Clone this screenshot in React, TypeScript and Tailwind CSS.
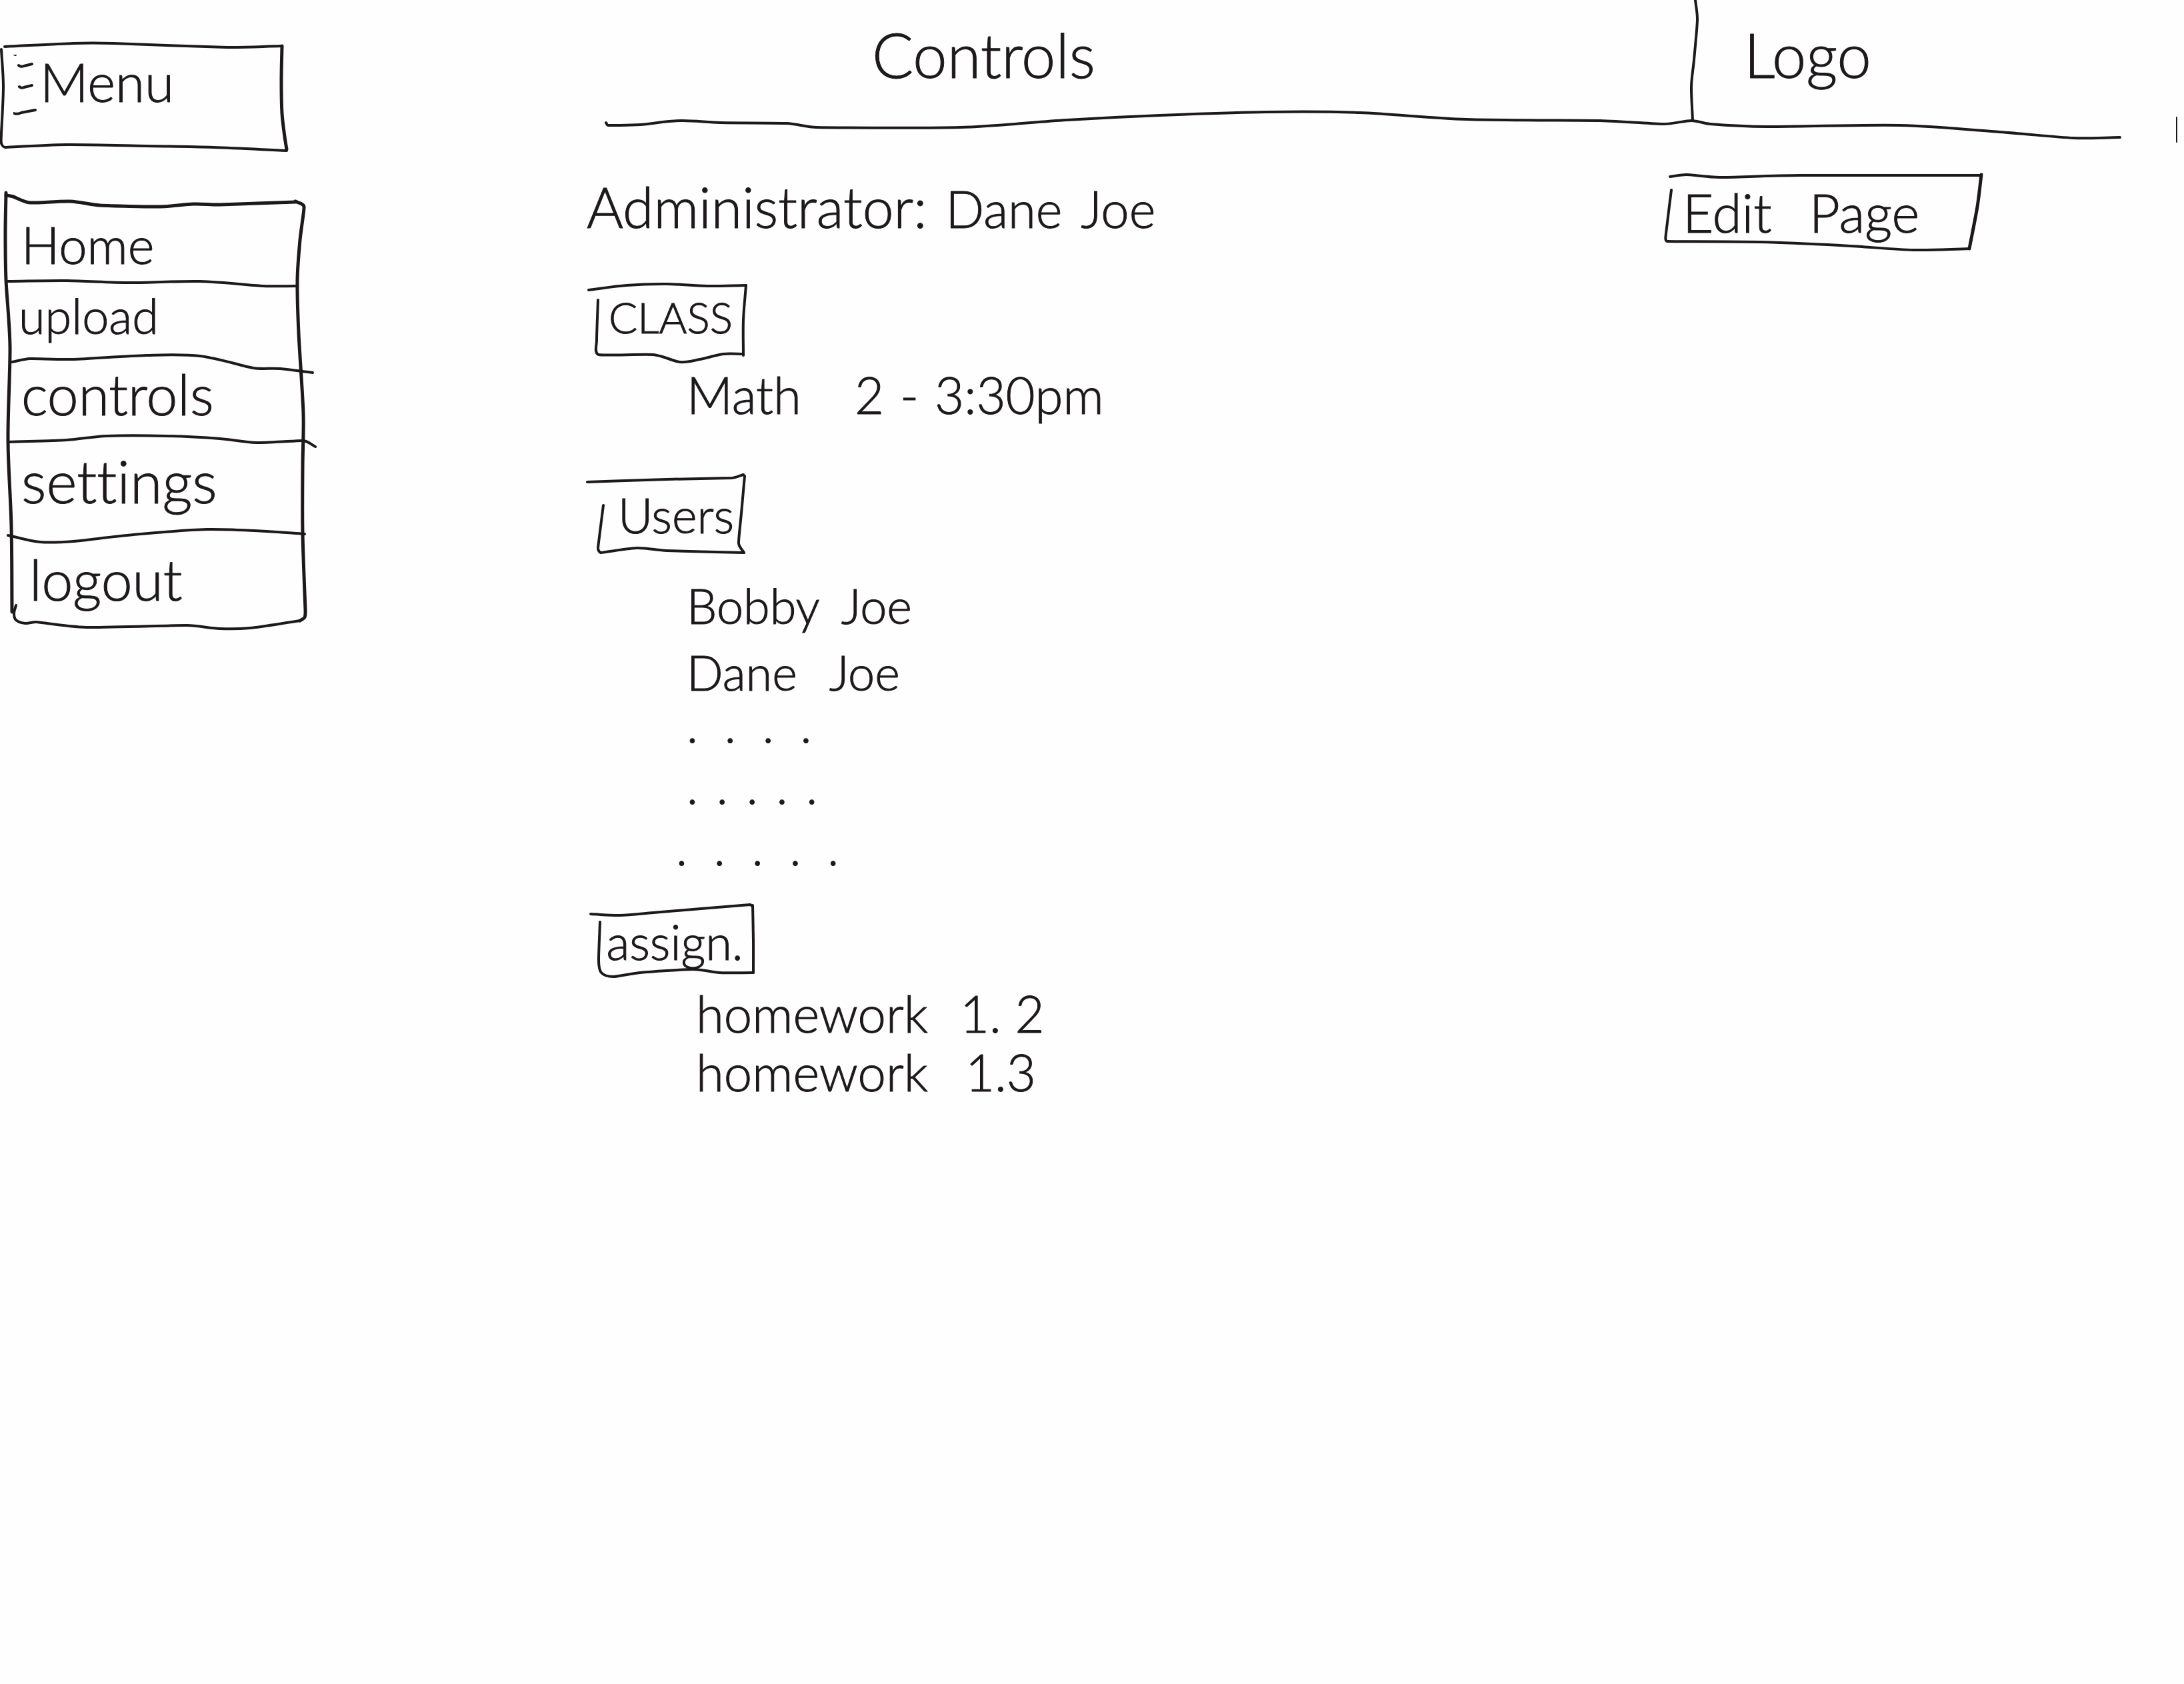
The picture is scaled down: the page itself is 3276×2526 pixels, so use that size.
import type { ReactNode } from "react";

type Stroke = { points: number[]; width?: number };

/** Turns a flat x,y list into a smooth pen stroke. */
function penPath(points: number[]): string {
  const p: [number, number][] = [];
  for (let i = 0; i < points.length; i += 2) p.push([points[i], points[i + 1]]);
  const unit = (i: number): [number, number] => {
    const a = p[Math.max(i - 1, 0)];
    const b = p[Math.min(i + 1, p.length - 1)];
    const len = Math.hypot(b[0] - a[0], b[1] - a[1]) || 1;
    return [(b[0] - a[0]) / len, (b[1] - a[1]) / len];
  };
  let d = `M${p[0][0]} ${p[0][1]}`;
  for (let i = 0; i < p.length - 1; i++) {
    const b = p[i];
    const c = p[i + 1];
    const reach = Math.hypot(c[0] - b[0], c[1] - b[1]);
    const prev = i > 0 ? Math.hypot(b[0] - p[i - 1][0], b[1] - p[i - 1][1]) : reach;
    const next = i + 2 < p.length ? Math.hypot(p[i + 2][0] - c[0], p[i + 2][1] - c[1]) : reach;
    const r1 = Math.min(reach, prev) / 3;
    const r2 = Math.min(reach, next) / 3;
    const u = unit(i);
    const v = unit(i + 1);
    d += `C${b[0] + u[0] * r1} ${b[1] + u[1] * r1} ${c[0] - v[0] * r2} ${c[1] - v[1] * r2} ${c[0]} ${c[1]}`;
  }
  return d;
}

/** Pen-drawn outline that stretches with the box it decorates. */
function Pen({ box, strokes }: { box: string; strokes: Stroke[] }) {
  return (
    <svg
      aria-hidden="true"
      viewBox={box}
      preserveAspectRatio="none"
      className="pointer-events-none absolute inset-0 size-full overflow-visible"
      fill="none"
      stroke="#1d181c"
      strokeLinecap="round"
      strokeLinejoin="round"
    >
      {strokes.map((s, i) => (
        <path key={i} d={penPath(s.points)} strokeWidth={s.width ?? 4} vectorEffect="non-scaling-stroke" />
      ))}
    </svg>
  );
}

const menuStrokes: Stroke[] = [
  { points: [7, 70, 110, 65, 170, 65, 340, 71, 422, 69] },
  { points: [423, 69, 422, 120, 423, 170, 427, 205, 430, 224], width: 5 },
  { points: [430, 226, 320, 221, 220, 219, 100, 217, 8, 221, 2, 215, 2, 200, 5, 130, 2, 74] },
];

const navStrokes: Stroke[] = [
  { points: [9, 293, 20, 295, 45, 304, 105, 302, 150, 308, 240, 310, 290, 306, 330, 307, 443, 303], width: 5 },
  { points: [443, 302, 456, 310, 450, 360, 446, 420, 448, 500, 455, 620, 454, 700, 454, 800, 458, 915, 457, 926, 450, 931], width: 5 },
  { points: [450, 931, 375, 942, 330, 943, 280, 938, 130, 941, 55, 933, 38, 935, 24, 930, 21, 920, 24, 908] },
  { points: [9, 289, 8, 350, 9, 420, 15, 520, 12, 660, 17, 790, 18, 918], width: 5 },
  { points: [12, 422, 100, 421, 195, 424, 300, 422, 395, 429, 446, 429] },
  { points: [18, 543, 45, 538, 110, 539, 220, 533, 300, 534, 380, 552, 420, 553, 469, 559] },
  { points: [12, 663, 100, 660, 160, 654, 250, 654, 330, 658, 385, 664, 455, 661, 473, 670] },
  { points: [12, 803, 60, 813, 110, 812, 200, 802, 310, 794, 400, 797, 457, 801] },
];

const headerStrokes: Stroke[] = [
  {
    points: [
      909, 184, 912, 188, 960, 187, 1020, 181, 1080, 184, 1180, 185, 1225, 191, 1440, 191, 1600, 180, 1740, 173,
      1900, 168, 2040, 169, 2200, 179, 2400, 181, 2495, 186, 2537, 181, 2565, 186, 2650, 190, 2850, 188, 3000, 198,
      3110, 207, 3180, 206,
    ],
  },
  { points: [2543, 0, 2546, 30, 2541, 90, 2537, 130, 2539, 181] },
  { points: [3265, 176, 3265, 213], width: 2 },
];

const editStrokes: Stroke[] = [
  { points: [2505, 265, 2530, 262, 2580, 266, 2700, 263, 2971, 263] },
  { points: [2972, 262, 2966, 310, 2954, 373], width: 5 },
  { points: [2954, 373, 2870, 375, 2760, 368, 2640, 363, 2501, 362, 2499, 350, 2507, 285] },
];

const classStrokes: Stroke[] = [
  { points: [883, 435, 940, 428, 1000, 426, 1060, 429, 1119, 428] },
  { points: [1119, 428, 1115, 480, 1115, 533] },
  { points: [1115, 531, 1085, 531, 1050, 539, 1020, 543, 980, 532, 898, 532, 895, 510, 897, 450] },
];

const usersStrokes: Stroke[] = [
  { points: [881, 723, 1000, 719, 1098, 717, 1115, 712] },
  { points: [1117, 714, 1112, 770, 1108, 815, 1116, 829] },
  { points: [1116, 829, 1000, 826, 955, 822, 902, 829, 897, 822, 905, 758] },
];

const assignStrokes: Stroke[] = [
  { points: [886, 1371, 930, 1373, 980, 1369, 1125, 1357, 1129, 1360] },
  { points: [1129, 1358, 1130, 1410, 1130, 1459] },
  { points: [1130, 1459, 1080, 1459, 1040, 1454, 960, 1459, 920, 1465, 902, 1459, 898, 1440, 900, 1383] },
];

const navItems = [
  { label: "Home", style: "h-32 pl-6 text-[76px]" },
  { label: "upload", style: "h-24 pb-3 pl-5 text-[72px]" },
  { label: "controls", style: "h-32 pl-6 text-[84px]" },
  { label: "settings", style: "h-36 pb-3 pl-6 text-[88px]" },
  { label: "logout", style: "h-[139px] pl-9 text-[84px]" },
];

function SectionTag({ style, box, strokes, children }: { style: string; box: string; strokes: Stroke[]; children: ReactNode }) {
  return (
    <h2 className={`relative ml-4 flex h-[104px] items-center justify-center ${style}`}>
      <Pen box={box} strokes={strokes} />
      {children}
    </h2>
  );
}

function Dots({ style, count }: { style: string; count: number }) {
  return (
    <li className={`flex h-[92px] items-center ${style}`}>
      {Array.from({ length: count }, (_, i) => (
        <span key={i}>.</span>
      ))}
    </li>
  );
}

export default function App() {
  return (
    <div className="flex min-h-screen overflow-x-hidden bg-[#fefefe] font-['Lato',sans-serif] leading-none font-light text-[#1d181c] [-webkit-text-stroke:1px_#1d181c] [font-variant-ligatures:none]">
      <aside className="w-[880px] shrink-0 pt-[66px]">
        <button type="button" className="relative flex h-40 w-[430px] items-start gap-1 pt-4 pl-5 text-left">
          <Pen box="0 66 430 160" strokes={menuStrokes} />
          <svg aria-hidden="true" viewBox="0 0 36 96" className="h-24 w-9" fill="none" stroke="#1d181c" strokeWidth="4" strokeLinecap="round">
            <path d="M1 -1l2 1M8 16q3 3 8 1l12 -3M9 48q3 3 7 1l12 -3M1 88q5 2 11 -1l21 -4" />
          </svg>
          <span className="text-[80px] leading-none">Menu</span>
        </button>

        <nav aria-label="Main" className="relative mt-[77px] ml-2 w-[450px]">
          <Pen box="8 303 450 635" strokes={navStrokes} />
          {navItems.map((item) => (
            <a key={item.label} href="#" className={`flex items-center ${item.style}`}>
              {item.label}
            </a>
          ))}
        </nav>
      </aside>

      <div className="min-w-0 flex-1">
        <header className="relative mr-24 ml-7 flex h-[186px]">
          <Pen box="908 0 2272 186" strokes={headerStrokes} />
          <h1 className="flex-1 pt-9 pl-[400px] text-[92px]">Controls</h1>
          <div className="w-[640px] pt-9 pl-[76px] text-[92px]">Logo</div>
        </header>

        <main className="pt-[76px]">
          <div className="mr-[304px] flex h-28 items-center justify-between">
            <p className="flex items-baseline gap-7 pb-4 text-[76px] whitespace-nowrap">
              <span className="text-[84px]">Administrator:</span>
              <span>Dane</span>
              <span>Joe</span>
            </p>
            <button type="button" className="relative flex h-28 w-[472px] items-center gap-14 pl-6 text-[80px] leading-none">
              <Pen box="2500 262 472 112" strokes={editStrokes} />
              <span>Edit</span>
              <span>Page</span>
            </button>
          </div>

          <section className="pt-[54px]">
            <SectionTag style="w-[220px] pb-2 text-[64px]" box="896 428 220 104" strokes={classStrokes}>
              CLASS
            </SectionTag>
            <p className="mt-4 flex h-[88px] items-center gap-6 pl-[150px] text-[76px]">
              <span className="mr-14">Math</span>
              <span>2</span>
              <span>-</span>
              <span>3:30pm</span>
            </p>
          </section>

          <section className="pt-[84px]">
            <SectionTag style="w-[220px] pl-4 text-[72px]" box="896 720 220 104" strokes={usersStrokes}>
              Users
            </SectionTag>
            <ul className="mt-9 pl-[150px] text-[72px]">
              <li className="flex h-24 items-center gap-8">
                <span>Bobby</span>
                <span>Joe</span>
              </li>
              <li className="flex h-[104px] items-center gap-12">
                <span>Dane</span>
                <span>Joe</span>
              </li>
              <Dots style="-mt-5 gap-10" count={4} />
              <Dots style="gap-7" count={5} />
              <Dots style="-ml-4 gap-10" count={5} />
            </ul>
          </section>

          <section className="pt-11">
            <SectionTag style="w-[232px] text-[72px]" box="896 1360 232 104" strokes={assignStrokes}>
              assign.
            </SectionTag>
            <ul className="mt-3 pl-[164px] text-[76px]">
              <li className="flex h-[88px] items-center gap-12">
                <span>homework</span>
                <span>1. 2</span>
              </li>
              <li className="flex h-[88px] items-center gap-14">
                <span>homework</span>
                <span>1.3</span>
              </li>
            </ul>
          </section>
        </main>
      </div>
    </div>
  );
}
